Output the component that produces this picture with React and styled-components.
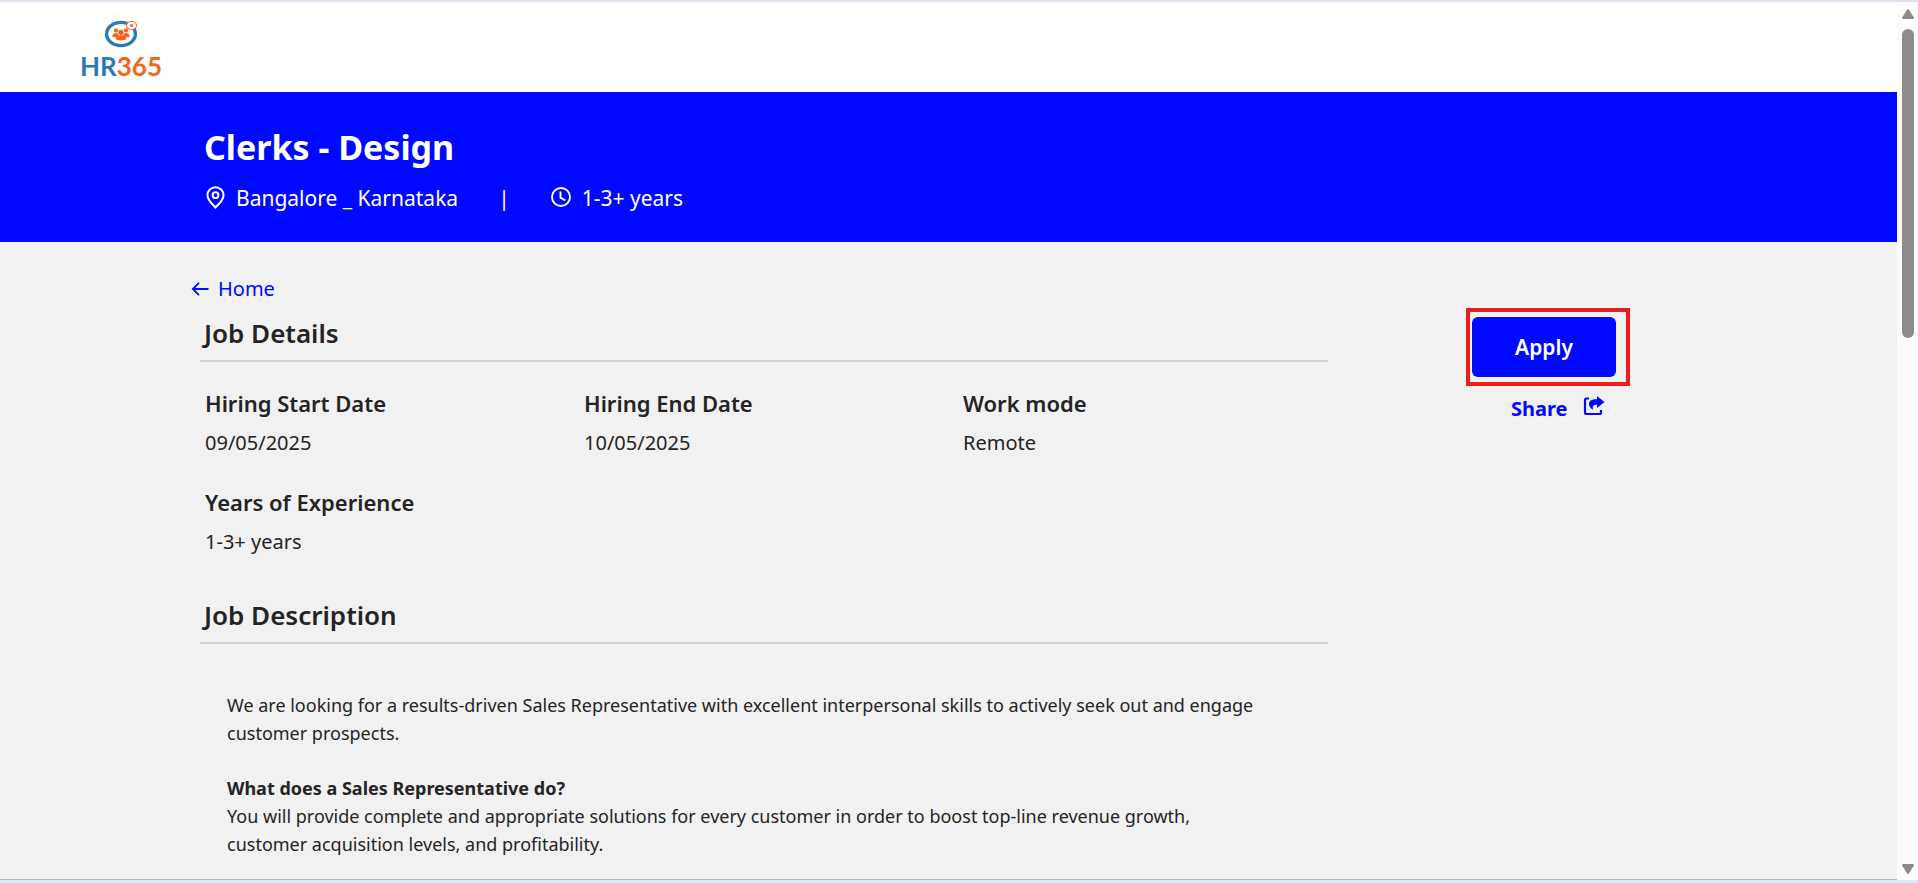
import React from "react";
import styled, { createGlobalStyle, css } from "styled-components";

const blue = "#0008ff";

const GlobalStyle = createGlobalStyle`
  *, *::before, *::after { box-sizing: border-box; }
  body {
    margin: 0;
    background: #f1f1f1;
    color: #242424;
    font-family: "Noto Sans", "Segoe UI", sans-serif;
  }
  h1, h2, h3, p, dl, dt, dd { margin: 0; }
`;

const Frame = styled.div`
  display: flex;
  height: 100vh;
  border-top: 2px solid #dfe2ee;
  border-bottom: 3px solid #dfe6f3;
`;

const Page = styled.div`
  flex: 1;
  min-width: 0;
  overflow: hidden;
  border-bottom: 1px solid #b4b8c2;
`;

const Header = styled.header`
  height: 90px;
  padding: 16px 80px 0;
  background: #fff;
`;

const Logo = styled.a`
  display: inline-flex;
  flex-direction: column;
  align-items: center;
  color: #2b79b5;
  font: 700 26px/32px Lato, sans-serif;
  text-decoration: none;

  svg { display: block; }
`;

const LogoNumber = styled.span`
  color: #f2651c;
`;

const Banner = styled.section`
  padding: 31px 204px 30px;
  background: ${blue};
  color: #fff;
`;

const Title = styled.h1`
  font-size: 34px;
  font-weight: 700;
  line-height: 48px;
`;

const Facts = styled.div`
  display: flex;
  align-items: center;
  margin-top: 13px;
  font-size: 21px;
  line-height: 28px;
`;

const Fact = styled.span`
  display: flex;
  align-items: center;
  gap: 10px;
`;

const Separator = styled.span`
  margin: 0 40px;
`;

const Body = styled.main`
  display: grid;
  grid-template-columns: 2fr 1fr;
  padding: 33px 5px 0 200px;
`;

const HomeLink = styled.a`
  display: flex;
  align-items: center;
  gap: 8px;
  width: max-content;
  margin-left: -10px;
  color: ${blue};
  font-size: 20px;
  line-height: 28px;
  text-decoration: none;
`;

const Section = styled.section`
  margin-top: ${(p) => (p.$first ? 10 : 39)}px;
`;

const Heading = styled.h2`
  padding: 0 4px 7px;
  border-bottom: 2px solid #d1d1d1;
  font-size: 26px;
  font-weight: 600;
  line-height: 40px;
`;

const Details = styled.dl`
  display: grid;
  grid-template-columns: repeat(3, 1fr);
  gap: 29px 14px;
  padding: 25px 0 0 5px;
`;

const Label = styled.dt`
  font-size: 22px;
  font-weight: 600;
  line-height: 32px;
`;

const Value = styled.dd`
  margin-top: 10px;
  font-size: 20px;
  line-height: 28px;
`;

const Description = styled.div`
  padding: 47px 64px 0 27px;
  font-size: 18px;
  line-height: 28px;

  p + h3 { margin-top: 27px; }
  h3 { font-size: inherit; font-weight: 700; }
`;

const Actions = styled.aside`
  padding: 33px 0 0 138px;
`;

const Highlight = styled.div`
  width: 164px;
  padding: 5px 2px;
  border: 4px solid #ea1c20;
`;

const action = css`
  border: 0;
  font: 700 20px/28px "Noto Sans", sans-serif;
  cursor: pointer;
`;

const ApplyButton = styled.button`
  ${action}
  display: block;
  width: 144px;
  height: 60px;
  border-radius: 6px;
  background: ${blue};
  color: #fff;
  font-size: 21px;
  font-weight: 600;
`;

const ShareButton = styled.button`
  ${action}
  display: flex;
  align-items: center;
  gap: 16px;
  margin: 9px 0 0 45px;
  padding: 0;
  background: none;
  color: ${blue};
`;

const Scrollbar = styled.div`
  display: flex;
  flex-direction: column;
  align-items: center;
  width: 21px;
  padding: 6px 0 5px;
  background: #fcfcfc;

  svg { display: block; flex: none; }
`;

const Track = styled.div`
  flex: 1;
  padding-top: 9px;
`;

const Thumb = styled.div`
  width: 12px;
  height: 37%;
  border-radius: 6px;
  background: #8b8b8b;
`;

const LogoMark = () => (
  <svg width="38" height="32" viewBox="0 0 38 32" aria-hidden="true">
    <ellipse cx="19" cy="16" rx="14.400" ry="11.600" fill="none" stroke="#2b79b5" strokeWidth="3.400" />
    <g fill="#f2651c">
      <circle cx="14" cy="12.400" r="2.100" />
      <circle cx="24" cy="12.400" r="2.100" />
      <path d="M10.400 19.200c0-3 1.300-4.200 3.600-4.200 1.600 0 2.600.8 2.800 4.200z" />
      <path d="M27.600 19.200c0-3-1.300-4.200-3.600-4.200-1.600 0-2.600.8-2.800 4.200z" />
      <circle cx="19" cy="14.400" r="2.700" />
      <path d="M13.600 21.200c0-2.800 1.800-4 5.400-4s5.400 1.200 5.400 4c-3 1.400-7.800 1.400-10.800 0z" />
    </g>
    <ellipse cx="29.500" cy="7.500" rx="5" ry="4" fill="#fff" stroke="#f2651c" strokeWidth="1.200" />
    <circle cx="29.500" cy="7.500" r="1.600" fill="#f2651c" />
  </svg>
);

const PinIcon = () => (
  <svg width="22" height="26" viewBox="0 0 22 26" fill="none" stroke="currentColor" strokeWidth="2" aria-hidden="true">
    <path d="M11.500 22.500C9 19.500 3.500 15.700 3.500 10.200a8 8 0 0 1 16 0C19.500 15.700 14 19.500 11.500 22.500z" />
    <circle cx="11.500" cy="10.200" r="2.900" />
  </svg>
);

const ClockIcon = () => (
  <svg width="22" height="24" viewBox="0 0 22 24" fill="none" stroke="currentColor" strokeWidth="1.900" aria-hidden="true">
    <circle cx="11" cy="11" r="9" />
    <path d="M10.500 5.500v6.200l4.800 2.600" />
  </svg>
);

const ArrowIcon = () => (
  <svg width="20" height="20" viewBox="0 0 20 20" fill="none" stroke="currentColor" strokeWidth="1.800" aria-hidden="true">
    <path d="M18.500 10H3M9 3.800L2.800 10 9 16.200" />
  </svg>
);

const ShareIcon = () => (
  <svg width="22" height="28" viewBox="0 0 22 28" aria-hidden="true">
    <path d="M6 3.500H3.500Q2 3.500 2 5v12.500Q2 19 3.500 19h13Q18 19 18 17.500v-2.500" fill="none" stroke="currentColor" strokeWidth="2.200" />
    <path d="M14 1l7.500 6L14 13V9.800c-3.500 0-5 1.200-3.800 4.900C7.500 13.500 6 11.500 6 9 6 5.500 9 4.200 14 4.200z" fill="currentColor" />
  </svg>
);

const Triangle = ({ down }) => (
  <svg width="14" height="12" viewBox="0 0 14 12" aria-hidden="true">
    <path
      d={down ? "M2 2h10L7 10z" : "M2 10h10L7 2z"}
      fill="#8b8b8b"
      stroke="#8b8b8b"
      strokeWidth="2"
      strokeLinejoin="round"
    />
  </svg>
);

const details = [
  ["Hiring Start Date", "09/05/2025"],
  ["Hiring End Date", "10/05/2025"],
  ["Work mode", "Remote"],
  ["Years of Experience", "1-3+ years"],
];

export default function App() {
  return (
    <>
      <GlobalStyle />
      <Frame>
        <Page>
          <Header>
            <Logo href="#">
              <LogoMark />
              <span>HR<LogoNumber>365</LogoNumber></span>
            </Logo>
          </Header>
          <Banner>
            <Title>Clerks - Design</Title>
            <Facts>
              <Fact><PinIcon />Bangalore _ Karnataka</Fact>
              <Separator>|</Separator>
              <Fact><ClockIcon />1-3+ years</Fact>
            </Facts>
          </Banner>
          <Body>
            <div>
              <HomeLink href="#"><ArrowIcon />Home</HomeLink>
              <Section $first>
                <Heading>Job Details</Heading>
                <Details>
                  {details.map(([label, value]) => (
                    <div key={label}>
                      <Label>{label}</Label>
                      <Value>{value}</Value>
                    </div>
                  ))}
                </Details>
              </Section>
              <Section>
                <Heading>Job Description</Heading>
                <Description>
                  <p>
                    We are looking for a results-driven Sales Representative with excellent
                    interpersonal skills to actively seek out and engage customer prospects.
                  </p>
                  <h3>What does a Sales Representative do?</h3>
                  <p>
                    You will provide complete and appropriate solutions for every customer in order
                    to boost top-line revenue growth, customer acquisition levels, and profitability.
                  </p>
                </Description>
              </Section>
            </div>
            <Actions>
              <Highlight>
                <ApplyButton type="button">Apply</ApplyButton>
              </Highlight>
              <ShareButton type="button">Share<ShareIcon /></ShareButton>
            </Actions>
          </Body>
        </Page>
        <Scrollbar aria-hidden="true">
          <Triangle />
          <Track><Thumb /></Track>
          <Triangle down />
        </Scrollbar>
      </Frame>
    </>
  );
}
